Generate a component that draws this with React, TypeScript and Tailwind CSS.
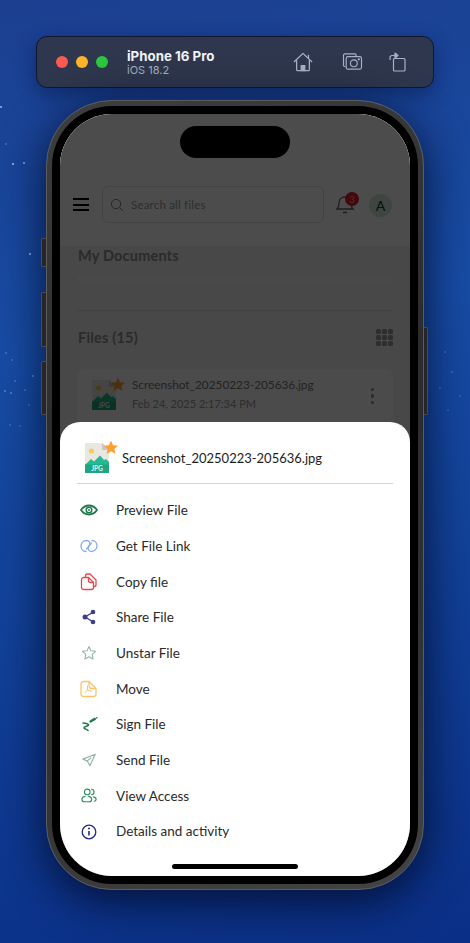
const appFont = "font-['Lato','Liberation_Sans',sans-serif]";

const FileIcon = () => (
  <svg width="34" height="34" viewBox="0 0 34 34" fill="none">
    <path d="M1 2h17l7 7v23H1z" fill="#e9e7e0" />
    <path d="M18 2l7 7h-7z" fill="#c9c7bf" />
    <circle cx="7.5" cy="10" r="2.6" fill="#f2cd58" />
    <path d="M1 24l6-6 3 2.5 6-6 4 4.5 2-1 3 3V32H1z" fill="#25b892" />
    <path d="M1 23.5h24V32H1z" fill="#1fa582" />
    <text x="13" y="30.4" textAnchor="middle" fontSize="6.6" fontWeight="700" fill="#dff5ee" fontFamily="Lato, sans-serif">JPG</text>
    <path d="M27 -0.5l2.1 4.7 5 .5-3.800 3.300 1.200 4.900-4.500-2.600-4.500 2.600 1.200-4.900-3.800-3.300 5-.5z" fill="#ff9f2e" />
  </svg>
);

const PreviewIcon = () => (
  <svg width="18" height="18" viewBox="0 0 18 18" fill="none">
    <path d="M1 9c2-3 4.800-4.500 8-4.500S15 6 17 9c-2 3-4.800 4.500-8 4.500S3 12 1 9z" stroke="#1f7a4c" strokeWidth="1.800" />
    <circle cx="9" cy="9" r="2.800" stroke="#1f7a4c" strokeWidth="1.500" />
    <circle cx="9" cy="9" r="1" fill="#1f7a4c" />
  </svg>
);

const LinkIcon = () => (
  <svg width="18" height="18" viewBox="0 0 18 18" fill="none" stroke="#7fabf5" strokeWidth="1.300" strokeLinecap="round">
    <path d="M6 14.500C3 14.500 1 12 1 9C1 6 3.500 3.500 6.500 3.500C9.500 3.500 10.500 6 9.500 8C8.800 9.500 7.500 11 6.500 12" />
    <path d="M12 3.500C15 3.500 17 6 17 9C17 12 14.500 14.500 11.500 14.500C8.500 14.500 7.500 12 8.500 10C9.200 8.500 10.500 7 11.500 6" />
  </svg>
);

const CopyIcon = () => (
  <svg width="18" height="18" viewBox="0 0 18 18" fill="none" stroke="#e5484d" strokeWidth="1.300" strokeLinejoin="round">
    <path d="M3.500 4.500h5l5 5v5a2 2 0 0 1-2 2h-8a2 2 0 0 1-2-2v-8a2 2 0 0 1 2-2z" />
    <path d="M5.500 4.500V3a2 2 0 0 1 2-2h2.500l6 6v4.500a2 2 0 0 1-2 2h-.5" />
    <path d="M8.500 4.500v3a2 2 0 0 0 2 2h3" />
  </svg>
);

const ShareIcon = () => (
  <svg width="18" height="18" viewBox="0 0 18 18" fill="#3f3d8f" stroke="#3f3d8f">
    <path d="M12.500 4.500L5 9l7.500 4.500" fill="none" strokeWidth="1.400" />
    <circle cx="13" cy="4" r="2.300" stroke="none" />
    <circle cx="5" cy="9" r="2.500" stroke="none" />
    <circle cx="13" cy="14" r="2.300" stroke="none" />
  </svg>
);

const StarIcon = () => (
  <svg width="16" height="16" viewBox="0 0 18 18" fill="none" stroke="#93b3a8" strokeWidth="1.200" strokeLinejoin="round">
    <path d="M9 1.800l2.200 4.700 5.100.6-3.700 3.500 1 5.100L9 13.200l-4.600 2.500 1-5.100-3.700-3.500 5.100-.6z" />
  </svg>
);

const MoveIcon = () => (
  <svg width="18" height="18" viewBox="0 0 18 18" fill="none" stroke="#fbc468" strokeWidth="1.300" strokeLinejoin="round">
    <path d="M3.500 1.500h5.500l7 7v5.500a2.500 2.500 0 0 1-2.500 2.500h-10A2.500 2.500 0 0 1 1 14V4a2.500 2.500 0 0 1 2.500-2.500z" />
    <path d="M9 1.500v4a3 3 0 0 0 3 3h4" />
    <path d="M7.500 5.500v4.500l-3 3M7.500 10l4.500 1.500" strokeWidth="1" />
  </svg>
);

const SignIcon = () => (
  <svg width="18" height="18" viewBox="0 0 18 18" fill="none" stroke="#1f7a4c" strokeLinecap="round" strokeLinejoin="round">
    <path d="M10.500 6.500l4.300-2.600" strokeWidth="2.400" />
    <path d="M16.400 3l.6-.4" strokeWidth="1.300" />
    <path d="M3 8C6 8 9 9 8.500 10.200C8 11.300 4 11.200 4 12.700C4 14 6.500 14 8 15.500" strokeWidth="1.600" />
  </svg>
);

const SendIcon = () => (
  <svg width="16" height="16" viewBox="0 0 18 18" fill="none" stroke="#93b3a8" strokeWidth="1.300" strokeLinejoin="round">
    <path d="M16 2.500L2 8l5 2 3 5.500z" />
    <path d="M7 10l4.500-3.500" />
  </svg>
);

const AccessIcon = () => (
  <svg width="16" height="17" viewBox="0 0 18 18" fill="none" stroke="#2f8f5f" strokeWidth="1.300" strokeLinecap="round">
    <circle cx="7" cy="5" r="3.200" />
    <path d="M4.500 10c-2.200.3-3.500 1.700-3.500 3.400 0 1.600 1.300 2.600 3 2.600h5c1.700 0 3-1 3-2.600 0-1.700-1.300-3.100-3.500-3.400" />
    <path d="M12 2c1.600.2 2.700 1.400 2.700 3s-1.100 2.800-2.700 3" />
    <path d="M14 10.500c1.800.3 3 1.300 3 2.700 0 1.200-.8 2-2 2.300" />
  </svg>
);

const InfoIcon = () => (
  <svg width="18" height="18" viewBox="0 0 18 18" fill="none" stroke="#1f2a7c">
    <circle cx="9" cy="9" r="6.800" strokeWidth="1.300" />
    <path d="M9 8v4.500" strokeWidth="1.600" />
    <circle cx="9" cy="5.600" r="1" fill="#1f2a7c" stroke="none" />
  </svg>
);

const actions = [
  { label: "Preview File", icon: <PreviewIcon /> },
  { label: "Get File Link", icon: <LinkIcon /> },
  { label: "Copy file", icon: <CopyIcon /> },
  { label: "Share File", icon: <ShareIcon /> },
  { label: "Unstar File", icon: <StarIcon /> },
  { label: "Move", icon: <MoveIcon /> },
  { label: "Sign File", icon: <SignIcon /> },
  { label: "Send File", icon: <SendIcon /> },
  { label: "View Access", icon: <AccessIcon /> },
  { label: "Details and activity", icon: <InfoIcon /> },
];

const specks = [
  [1, 107, 0.8], [13, 164, 0.9], [24, 163, 0.7], [6, 144, 0.3], [30, 254, 0.9], [6, 353, 0.3], [12, 360, 0.25],
  [33, 376, 0.5], [15, 381, 0.3], [25, 390, 0.3], [5, 391, 0.4], [11, 393, 0.4], [29, 405, 0.25], [10, 425, 0.25],
  [20, 426, 0.25], [445, 352, 0.25], [452, 372, 0.25], [440, 388, 0.25], [460, 396, 0.2], [448, 410, 0.2],
];

export default function App() {
  return (
    <div className={`relative h-[943px] w-[470px] overflow-hidden bg-[linear-gradient(170deg,#1c3f90_0%,#174ca4_35%,#124299_60%,#0a2f86_100%)] pt-[36px] ${appFont}`}>
      {/* wallpaper specks */}
      <svg className="absolute inset-0" width="470" height="943">
        {specks.map(([x, y, o], i) => (
          <circle key={i} cx={x} cy={y} r="0.9" fill="#cfe2ff" opacity={o} />
        ))}
      </svg>

      {/* simulator toolbar */}
      <div className="relative mx-[36px] flex h-[52px] items-center rounded-[11px] border border-[#10172e] bg-[#2e374d] pl-[19px] shadow-[0_6px_20px_rgba(5,15,50,0.45)]">
        <div className="flex gap-[8px]">
          <span className="h-[12px] w-[12px] rounded-full bg-[#fb5a52]" />
          <span className="h-[12px] w-[12px] rounded-full bg-[#fdb32a]" />
          <span className="h-[12px] w-[12px] rounded-full bg-[#2bc840]" />
        </div>
        <div className="ml-[19px] flex w-[90px] flex-col font-['Inter',sans-serif]">
          <span className="text-[13.300px] leading-[16px] font-bold text-[#f0f2f6]">iPhone 16 Pro</span>
          <span className="text-[11px] leading-[13px] text-[#a9afbd]">iOS 18.2</span>
        </div>
        <svg className="ml-[76px]" width="20" height="20" viewBox="0 0 22 22" fill="none" stroke="#a9b1c6" strokeWidth="1.400" strokeLinejoin="round">
          <path d="M1 11L11 1.500 21 11" />
          <path d="M17 7V3" />
          <path d="M4 9v10.500a1 1 0 0 0 1 1h12a1 1 0 0 0 1-1V9" />
          <path d="M9 20.500V15h4v5.500z" fill="#a9b1c6" />
        </svg>
        <svg className="ml-[29px]" width="21" height="18" viewBox="0 0 22 20" fill="none" stroke="#a9b1c6" strokeWidth="1.300" strokeLinejoin="round">
          <path d="M3 15H2.500A1.500 1.500 0 0 1 1 13.500V2.500A1.500 1.500 0 0 1 2.500 1h11A1.500 1.500 0 0 1 15 2.500V4" />
          <path d="M6 4h13a2 2 0 0 1 2 2v10a2 2 0 0 1-2 2H6a2 2 0 0 1-2-2V6a2 2 0 0 1 2-2z" />
          <circle cx="12.500" cy="11.500" r="3.800" />
          <circle cx="18" cy="7" r=".6" fill="#a9b1c6" />
        </svg>
        <svg className="ml-[26px]" width="17" height="20" viewBox="0 0 17 20" fill="none" stroke="#a9b1c6" strokeWidth="1.200" strokeLinejoin="round">
          <path d="M5.500 6.500h9.500a1 1 0 0 1 1 1V18a1 1 0 0 1-1 1H5.500a1 1 0 0 1-1-1V7.500a1 1 0 0 1 1-1z" />
          <path d="M1 8V5.500A2 2 0 0 1 3 3.500h4" />
          <path d="M6 1l3 2.500-3 2.500z" fill="#a9b1c6" />
        </svg>
      </div>

      {/* phone body */}
      <div className="relative mx-[46px] mt-[12px] h-[790px] w-[378px] rounded-[66px] border border-[#5c5c5c] bg-[linear-gradient(160deg,#3e3e3e,#2c2c2c_40%,#303030_70%,#444444)] p-[5px] shadow-[0_10px_45px_rgba(2,8,35,0.85)]">
        <span className="absolute top-[137px] left-[-6px] h-[29px] w-[5px] rounded-l-[2px] border border-r-0 border-[#4a4a4a] bg-[#262628]" />
        <span className="absolute top-[191px] left-[-6px] h-[55px] w-[5px] rounded-l-[2px] border border-r-0 border-[#4a4a4a] bg-[#262628]" />
        <span className="absolute top-[260px] left-[-6px] h-[54px] w-[5px] rounded-l-[2px] border border-r-0 border-[#4a4a4a] bg-[#262628]" />
        <span className="absolute top-[226px] right-[-5px] h-[88px] w-[4px] rounded-r-[2px] border border-l-0 border-[#4a4a4a] bg-[#262628]" />

        <div className="h-full w-full rounded-[60px] bg-black p-[8px]">
          <div className="relative h-full w-full overflow-hidden rounded-[52px] bg-[#f2f2f2]">
            {/* app under the dim layer */}
            <div className="flex h-[132px] items-end bg-white pb-[23px] pl-[13px]">
              <div className="mb-[12px] flex w-[16px] shrink-0 flex-col gap-[3.500px]">
                <span className="h-[2px] bg-black" />
                <span className="h-[2px] bg-black" />
                <span className="h-[2px] bg-black" />
              </div>
              <div className="ml-[13px] flex h-[37px] w-[222px] shrink-0 items-center gap-[7px] rounded-[6px] border border-[#dcdcdc] bg-white pl-[7px]">
                <svg width="14" height="14" viewBox="0 0 15 15" fill="none" stroke="#777" strokeWidth="1">
                  <circle cx="6.500" cy="6.500" r="5" />
                  <path d="M10.200 10.200L14 14" />
                </svg>
                <span className="text-[11.500px] tracking-[0.2px] text-[#999]">Search all files</span>
              </div>
              <div className="relative mb-[8px] ml-[11px] shrink-0">
                <svg width="20" height="22" viewBox="0 0 20 22" fill="none" stroke="#666" strokeWidth="1.300">
                  <path d="M2 16c1.500-1.500 2-3 2-6 0-3.500 2.500-6 6-6s6 2.500 6 6c0 3 .5 4.500 2 6z" />
                  <path d="M8 19.500h4" strokeWidth="1.600" />
                </svg>
                <span className="absolute top-[-1px] left-[10px] flex h-[14px] w-[14px] items-center justify-center rounded-full bg-[#e01b24] text-[9px] leading-none text-[#f3a7a7]">3</span>
              </div>
              <div className="mb-[6px] ml-[14px] flex h-[23px] w-[23px] shrink-0 items-center justify-center rounded-full bg-[#d3ecd9] text-[14px] leading-none font-medium text-[#0c4a24]">A</div>
            </div>

            <div className="px-[17px] pt-[1px]">
              <p className="ml-[1px] text-[14.500px] leading-[18px] font-bold tracking-[0.2px] text-[#909090]">My Documents</p>
              <div className="mt-[12px] h-[6px] rounded-b-[8px] bg-[#f8f8f8]" />
              <div className="mt-[27px] h-px bg-[#dedede]" />
              <div className="mt-[16px] flex items-center justify-between">
                <p className="ml-[1px] text-[14.500px] font-bold tracking-[0.2px] text-[#909090]">Files (15)</p>
                <div className="grid grid-cols-3 gap-[1px]">
                  {Array.from({ length: 9 }).map((_, i) => (
                    <span key={i} className="h-[5px] w-[5px] rounded-[1.500px] bg-[#999]" />
                  ))}
                </div>
              </div>
              <div className="mt-[20px] flex h-[60px] items-start rounded-[8px] bg-[#fafafa] pt-[9px] pl-[14px]">
                <FileIcon />
                <div className="-mt-[2px] ml-[7px]">
                  <p className="text-[11.800px] leading-[18px] text-[#777]">Screenshot_20250223-205636.jpg</p>
                  <p className="text-[11px] leading-[19px] text-[#999]">Feb 24, 2025 2:17:34 PM</p>
                </div>
                <div className="mt-[10px] mr-[19px] ml-auto flex flex-col gap-[3px]">
                  <span className="h-[3.500px] w-[3.500px] rounded-full bg-[#8c8c8c]" />
                  <span className="h-[3.500px] w-[3.500px] rounded-full bg-[#8c8c8c]" />
                  <span className="h-[3.500px] w-[3.500px] rounded-full bg-[#8c8c8c]" />
                </div>
              </div>
            </div>

            <div className="absolute inset-0 bg-black/70" />
            <div className="absolute top-[12px] left-1/2 h-[32px] w-[110px] -translate-x-1/2 rounded-full bg-black" />

            {/* bottom sheet */}
            <div className="absolute inset-x-0 bottom-0 h-[454px] rounded-t-[20px] bg-white">
              <div className="mx-[17px] flex h-[62px] items-start border-b border-[#d4d4d4] pt-[19px] pl-[7px]">
                <FileIcon />
                <span className="mt-[8px] ml-[4px] text-[13px] leading-[18px] text-[#1c1c1c]">Screenshot_20250223-205636.jpg</span>
              </div>
              <ul className="mt-[8.500px] flex flex-col">
                {actions.map((a) => (
                  <li key={a.label} className="flex h-[35.700px] items-center pl-[20px]">
                    <span className="flex w-[18px] justify-center">{a.icon}</span>
                    <span className="ml-[18px] text-[13.500px] text-[#2a2a2a]">{a.label}</span>
                  </li>
                ))}
              </ul>
            </div>
            <div className="absolute bottom-[7px] left-1/2 h-[5px] w-[126px] -translate-x-1/2 rounded-full bg-black" />
          </div>
        </div>
      </div>
    </div>
  );
}
